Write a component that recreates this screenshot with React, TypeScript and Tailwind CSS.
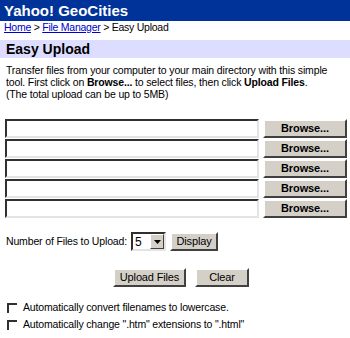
import React from "react";

const btn =
  "bg-[#d4d0c8] border-2 border-t-white border-l-white border-r-[#404040] border-b-[#404040] text-black leading-none flex items-center justify-center";

const inset =
  "bg-white border-2 border-t-[#303030] border-l-[#303030] border-r-[#e4e4e4] border-b-[#e4e4e4]";

function FileRow() {
  return (
    <div className="flex items-center h-[20px]">
      <div className={inset + " ml-[5px] w-[254px] h-[19px]"} />
      <div className={btn + " ml-[4px] w-[84px] h-[19px] text-[11px] font-bold tracking-[-0.1px]"}>Browse...</div>
    </div>
  );
}

export default function App() {
  return (
    <div
      className="w-[350px] h-[338px] bg-white text-black overflow-hidden text-[10.5px] tracking-[-0.15px]"
      style={{ fontFamily: '"Liberation Sans", Arial, sans-serif' }}
    >
      <div className="h-[21px] bg-[#003399] flex items-center px-[4px]">
        <span className="text-white font-bold text-[15px] leading-none tracking-[0px]">Yahoo! GeoCities</span>
      </div>
      <div className="px-[4px] h-[13px] leading-[13px] tracking-[-0.25px]">
        <span className="text-[#0000cc] underline">Home</span> &gt;{" "}
        <span className="text-[#0000cc] underline">File Manager</span> &gt; Easy Upload
      </div>
      <div className="mt-[6px] h-[18px] bg-[#ddddff] flex items-center px-[6px]">
        <span className="font-bold text-[14px] leading-none tracking-[0px]">Easy Upload</span>
      </div>
      <div className="leading-[12px] px-[6px] pt-[6px]">
        <p>
          Transfer files from your computer to your main directory with this simple tool. First click on{" "}
          <b>Browse...</b> to select files, then click <b>Upload Files</b>.
        </p>
        <p>(The total upload can be up to 5MB)</p>
      </div>
      <div className="mt-[18px] flex flex-col">
        <FileRow />
        <FileRow />
        <FileRow />
        <FileRow />
        <FileRow />
      </div>
      <div className="mt-[14px] flex items-center pl-[6px] h-[19px]">
        <span>Number of Files to Upload:</span>
        <div className={inset + " ml-[4px] w-[35px] h-[19px] flex items-center justify-between"}>
          <span className="pl-[2px] text-[12px] leading-none">5</span>
          <div className="w-[14px] h-[15px] bg-[#d4d0c8] border border-t-white border-l-white border-r-[#404040] border-b-[#404040] flex items-center justify-center">
            <svg width="7" height="4" viewBox="0 0 7 4">
              <path d="M0 0H7L3.5 4Z" fill="#000" />
            </svg>
          </div>
        </div>
        <div className={btn + " ml-[4px] w-[48px] h-[19px] text-[11px]"}>Display</div>
      </div>
      <div className="mt-[17px] flex gap-[9px] pl-[113px] h-[19px]">
        <div className={btn + " w-[73px] h-[19px] text-[11px]"}>Upload Files</div>
        <div className={btn + " w-[54px] h-[19px] text-[11px]"}>Clear</div>
      </div>
      <div className="mt-[14px] flex flex-col gap-[4px] pl-[7px]">
        <div className="flex items-center h-[13px]">
          <div className="w-[10px] h-[10px] border-t-2 border-l-2 border-t-[#303030] border-l-[#303030] bg-white" />
          <span className="ml-[6px]">Automatically convert filenames to lowercase.</span>
        </div>
        <div className="flex items-center h-[13px]">
          <div className="w-[10px] h-[10px] border-t-2 border-l-2 border-t-[#303030] border-l-[#303030] bg-white" />
          <span className="ml-[6px]">Automatically change ".htm" extensions to ".html"</span>
        </div>
      </div>
    </div>
  );
}
